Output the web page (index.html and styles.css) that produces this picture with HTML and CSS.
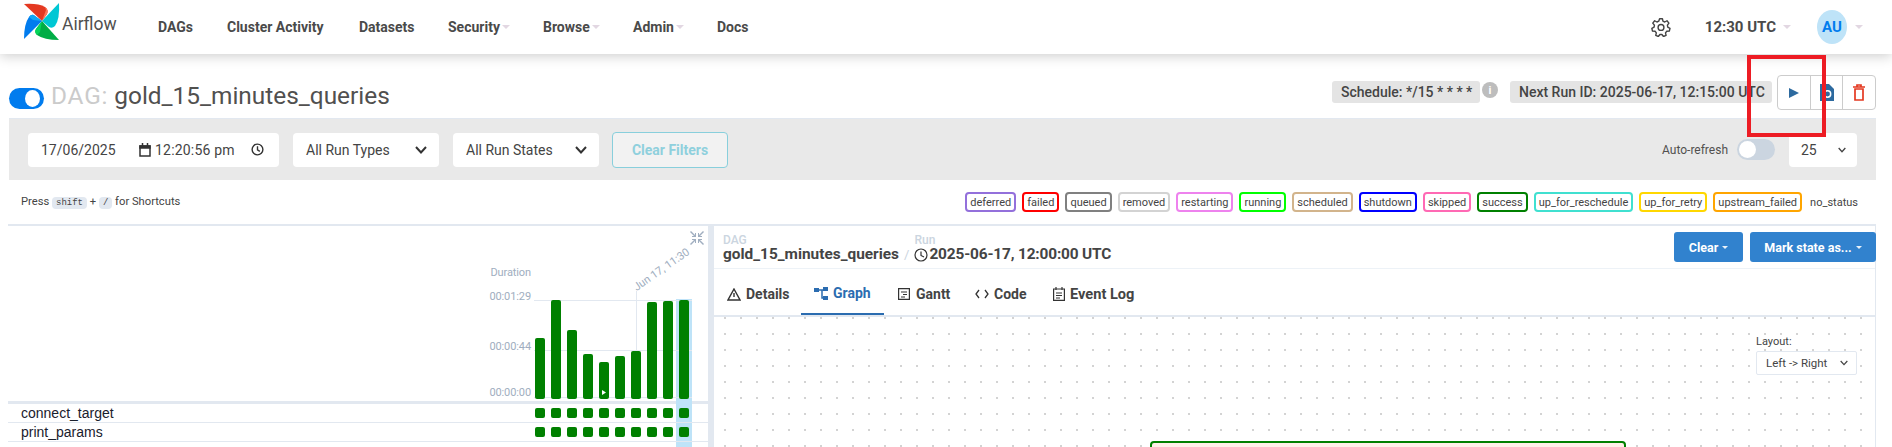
FILE: index.html
```html
<!DOCTYPE html>
<html lang="en">
<head>
<meta charset="utf-8">
<title>gold_15_minutes_queries - Airflow</title>
<link rel="stylesheet" href="styles.css">
</head>
<body>
<div class="page">
  <header class="navbar">
    <a class="brand">
      <svg class="logo" viewBox="0 0 37 37" width="37" height="37">
        <path d="M0 1 Q14 0 21 4 Q25 7 23 11 L18 18 Z" fill="#e43921"/>
        <path d="M21 4 Q25 7 23 11 L18 18 L22 7 Z" fill="#ff7557"/>
        <path d="M35 0 Q36 16 31 23 Q28 26 25 24 L18 18 Z" fill="#00c7d4"/>
        <path d="M35 37 Q20 37 13 32 Q10 29 12 26 L18 18 Z" fill="#00ad46"/>
        <path d="M13 32 Q10 29 12 26 L18 18 L16 29 Z" fill="#04d659"/>
        <path d="M0 36 Q0 21 5 14 Q8 10 11 13 L18 18 Z" fill="#017cee"/>
        <path d="M5 14 Q8 10 11 13 L18 18 L9 17 Z" fill="#11a8f5"/>
      </svg>
      <span class="brand-name">Airflow</span>
    </a>
    <nav class="nav">
      <a class="nav-item nav-dags">DAGs</a>
      <a class="nav-item nav-cluster">Cluster Activity</a>
      <a class="nav-item nav-datasets">Datasets</a>
      <a class="nav-item nav-security">Security<i class="caret"></i></a>
      <a class="nav-item nav-browse">Browse<i class="caret"></i></a>
      <a class="nav-item nav-admin">Admin<i class="caret"></i></a>
      <a class="nav-item">Docs</a>
    </nav>
    <div class="nav-right">
      <svg class="gear" viewBox="0 0 24 24" width="20" height="20" fill="none" stroke="#444" stroke-width="1.7" stroke-linejoin="round"><path d="M10.3 2h3.4l.6 3 2.2 1 2.7-1.5 2.3 2.8-1.8 2.5.4 2.4 2.7 1.4-.8 3.4-3.1.1-1.5 1.9.7 3-3.1 1.4-1.9-2.4h-2.4l-1.9 2.4-3.1-1.4.7-3-1.5-1.9-3.1-.1-.8-3.4 2.7-1.4.4-2.4L2.1 7.300l2.300-2.800L7.100 6l2.200-1z"/><circle cx="12" cy="12.500" r="3.500"/></svg>
      <span class="clock">12:30 UTC<i class="caret"></i></span>
      <span class="avatar">AU</span><i class="caret"></i>
    </div>
  </header>

  <section class="title-row">
    <div class="title-left">
      <span class="switch"><span class="knob"></span></span>
      <h1 class="title"><span class="title-muted">DAG:</span> gold_15_minutes_queries</h1>
    </div>
    <div class="title-right">
      <span class="badge badge-schedule">Schedule: */15 * * * *</span>
      <span class="info">i</span>
      <span class="badge badge-next">Next Run ID: 2025-06-17, 12:15:00 UTC</span>
      <div class="btn-group">
        <span class="icon-btn"><svg viewBox="0 0 10 10" width="10" height="10"><path d="M0 0 L10 5 L0 10 Z" fill="#2d6a9f"/></svg></span>
        <span class="icon-btn"><svg viewBox="0 0 14 17" width="14" height="17"><path d="M0 0 H9 L14 5 V17 H0 Z" fill="#2d6a9f"/><circle cx="7.500" cy="10" r="3.200" fill="none" stroke="#fff" stroke-width="1.500"/></svg></span>
        <span class="icon-btn"><svg viewBox="0 0 12 17" width="12" height="17" fill="none" stroke="#e43921" stroke-width="1.700"><path d="M0 3 H12 M4 3 V1 H8 V3"/><path d="M2 5 V16 H10 V5 Z"/></svg></span>
      </div>
    </div>
  </section>

  <section class="filters">
    <div class="field field-date">
      <span class="date-text">17/06/2025</span>
      <svg class="cal" viewBox="0 0 12 14" width="12" height="14" fill="none" stroke="#333" stroke-width="1.500"><path d="M1 3 H11 V13 H1 Z"/><path d="M1 3 H11 V5 H1 Z" fill="#333"/><path d="M3.500 0 V3 M8.500 0 V3"/></svg>
      <span class="time-text">12:20:56 pm</span>
      <svg class="clk" viewBox="0 0 14 14" width="13" height="13" fill="none" stroke="#333" stroke-width="1.500"><circle cx="7" cy="7" r="5.800"/><path d="M7 3.500 V7.500 L9.500 9"/></svg>
    </div>
    <div class="field field-select"><span>All Run Types</span><svg class="chev" viewBox="0 0 12 8" width="12" height="8" fill="none" stroke="#333" stroke-width="2"><path d="M1 1 L6 6.500 L11 1"/></svg></div>
    <div class="field field-select"><span>All Run States</span><svg class="chev" viewBox="0 0 12 8" width="12" height="8" fill="none" stroke="#333" stroke-width="2"><path d="M1 1 L6 6.500 L11 1"/></svg></div>
    <button class="clear-filters">Clear Filters</button>
    <div class="refresh">
      <span class="refresh-label">Auto-refresh</span>
      <span class="switch-off"><span class="knob-off"></span></span>
      <div class="field field-count"><span>25</span><svg viewBox="0 0 12 8" width="8" height="6" fill="none" stroke="#444" stroke-width="2"><path d="M1 1 L6 6.500 L11 1"/></svg></div>
    </div>
  </section>

  <section class="legend-row">
    <div class="shortcuts">Press <kbd class="kbd">shift</kbd> + <kbd class="kbd">/</kbd> for Shortcuts</div>
    <div class="legend">
      <span class="tag tag-deferred">deferred</span>
      <span class="tag tag-failed">failed</span>
      <span class="tag tag-queued">queued</span>
      <span class="tag tag-removed">removed</span>
      <span class="tag tag-restarting">restarting</span>
      <span class="tag tag-running">running</span>
      <span class="tag tag-scheduled">scheduled</span>
      <span class="tag tag-shutdown">shutdown</span>
      <span class="tag tag-skipped">skipped</span>
      <span class="tag tag-success">success</span>
      <span class="tag tag-reschedule">up_for_reschedule</span>
      <span class="tag tag-retry">up_for_retry</span>
      <span class="tag tag-upstream">upstream_failed</span>
      <span class="tag tag-none">no_status</span>
    </div>
  </section>

  <main class="main">
    <aside class="grid-panel">
      <span class="selected-col"></span>
      <svg class="collapse" viewBox="0 0 14 14" width="14" height="14" fill="#a0aec0"><path d="M0 1 L1 0 L5 4 V2 H6 V6 H2 V5 H4 Z M14 1 L13 0 L9 4 V2 H8 V6 H12 V5 H10 Z M0 13 L1 14 L5 10 V12 H6 V8 H2 V9 H4 Z M14 13 L13 14 L9 10 V12 H8 V8 H12 V9 H10 Z"/></svg>
      <span class="run-date">Jun 17, 11:30</span>
      <span class="run-tick"></span>
      <div class="chart">
        <div class="axis">
          <span class="axis-title">Duration</span>
          <span class="axis-label">00:01:29</span>
          <span class="axis-label">00:00:44</span>
          <span class="axis-label axis-label-low">00:00:00</span>
        </div>
        <div class="plot">
          <span class="gridline gridline-top"></span>
          <span class="gridline gridline-mid"></span>
          <span class="gridline gridline-low"></span>
          <span class="bar" style="height:61px"></span>
          <span class="bar" style="height:99px"></span>
          <span class="bar" style="height:69px"></span>
          <span class="bar" style="height:45px"></span>
          <span class="bar" style="height:37px"><svg class="bar-mark" viewBox="0 0 4 5" width="4" height="5"><path d="M0 0 L4 2.500 L0 5 Z" fill="#fff"/></svg></span>
          <span class="bar" style="height:43px"></span>
          <span class="bar" style="height:48px"></span>
          <span class="bar" style="height:97px"></span>
          <span class="bar" style="height:98px"></span>
          <span class="bar" style="height:99px"></span>
        </div>
      </div>
      <div class="chart-rule"></div>
      <div class="task-row">
        <span class="task-name">connect_target</span>
        <div class="cells"><i></i><i></i><i></i><i></i><i></i><i></i><i></i><i></i><i></i><i></i></div>
      </div>
      <div class="task-row">
        <span class="task-name">print_params</span>
        <div class="cells"><i></i><i></i><i></i><i></i><i></i><i></i><i></i><i></i><i></i><i></i></div>
      </div>
    </aside>
    <div class="splitter"></div>
    <section class="detail">
      <div class="crumbs">
        <div class="crumb-main">
          <div class="crumb">
            <span class="crumb-label">DAG</span>
            <span class="crumb-value">gold_15_minutes_queries</span>
          </div>
          <span class="crumb-sep">/</span>
          <div class="crumb">
            <span class="crumb-label crumb-label-run">Run</span>
            <span class="crumb-value crumb-date"><svg class="crumb-clock" viewBox="0 0 14 14" width="14" height="14" fill="none" stroke="#333" stroke-width="1.200"><circle cx="7" cy="7" r="6"/><path d="M7 3.500 V7.500 L10 9"/></svg>2025-06-17, 12:00:00 UTC</span>
          </div>
        </div>
        <div class="crumb-actions">
          <button class="action action-clear">Clear<i class="caret caret-white"></i></button>
          <button class="action action-mark">Mark state as...<i class="caret caret-white"></i></button>
        </div>
      </div>
      <div class="tabs">
        <a class="tab tab-details"><svg viewBox="0 0 14 13" width="14" height="13" fill="none" stroke="#333" stroke-width="1.400"><path d="M7 1 L13 12 H1 Z M7 5 V9"/></svg>Details</a>
        <a class="tab tab-graph tab-active"><svg viewBox="0 0 14 13" width="14" height="13" fill="#2b6cb0"><path d="M0 1 H5 V5 H0 Z M9 0 H14 V4 H9 Z M9 9 H14 V13 H9 Z"/><path d="M5 3 H9 M9 3 H8 V11 H9" stroke="#2b6cb0" stroke-width="1.500" fill="none"/></svg>Graph</a>
        <a class="tab tab-gantt"><svg viewBox="0 0 12 12" width="12" height="12" fill="none" stroke="#333" stroke-width="1.200"><path d="M.6.6 H11.400 V11.400 H.6 Z M3 4 H9 M5 6.500 H9 M3 9 H7"/></svg>Gantt</a>
        <a class="tab tab-code"><svg viewBox="0 0 14 10" width="14" height="10" fill="none" stroke="#333" stroke-width="1.300"><path d="M4 1 L1 5 L4 9 M10 1 L13 5 L10 9"/></svg>Code</a>
        <a class="tab tab-log"><svg viewBox="0 0 12 14" width="12" height="14" fill="none" stroke="#333" stroke-width="1.200"><path d="M.6 2 H11.400 V13.400 H.6 Z M3 0 V3 M9 0 V3 M3 6 H9 M3 8.500 H9 M3 11 H7"/></svg>Event Log</a>
      </div>
      <div class="canvas">
        <div class="layout-control">
          <label class="layout-label">Layout:</label>
          <div class="layout-select"><span>Left -&gt; Right</span><svg viewBox="0 0 12 8" width="8" height="6" fill="none" stroke="#444" stroke-width="1.800"><path d="M1 1 L6 6.500 L11 1"/></svg></div>
        </div>
        <div class="node"></div>
      </div>
    </section>
  </main>
  <div class="annotation"></div>
</div>
</body>
</html>
```
FILE: styles.css
```css
* { box-sizing: border-box; }
html, body { margin: 0; padding: 0; background: #fff; }
.page {
  position: relative;
  width: 1892px;
  height: 447px;
  overflow: hidden;
  font-family: Roboto, "Liberation Sans", sans-serif;
  color: #444;
}

/* navbar */
.navbar {
  position: relative;
  z-index: 2;
  display: flex;
  align-items: center;
  height: 54px;
  background: #fff;
  box-shadow: 0 2px 12px rgba(0, 0, 0, .2);
}
.brand { display: flex; align-items: center; width: 158px; padding: 0 0 0 24px; height: 54px; position: relative; }
.logo { margin-top: -12px; flex: none; }
.brand-name { font-size: 17.500px; color: #51504f; margin: -6px 0 0 1px; }
.nav { display: flex; align-items: center; }
.nav-item { display: flex; align-items: center; font-size: 14px; font-weight: 700; color: #4a4a4a; white-space: nowrap; }
.nav-dags { width: 69px; }
.nav-cluster { width: 132px; }
.nav-datasets { width: 89px; }
.nav-security { width: 95px; }
.nav-browse { width: 90px; }
.nav-admin { width: 84px; }
.caret {
  display: inline-block;
  width: 0; height: 0;
  margin-left: 2px;
  border-left: 4px solid transparent;
  border-right: 4px solid transparent;
  border-top: 4px solid #e2d7e2;
}
.nav-right { display: flex; align-items: center; margin-left: auto; padding-right: 29px; }
.gear { margin-right: 34px; }
.clock { display: flex; align-items: center; font-size: 15px; font-weight: 700; color: #4a4a4a; margin-right: 26px; }
.clock .caret { margin-left: 7px; }
.avatar {
  display: flex; align-items: center; justify-content: center;
  width: 30px; height: 34px;
  border-radius: 50%;
  background: #bee3f8;
  color: #017cee;
  font-size: 15px; font-weight: 700;
  margin-right: 6px;
}

/* title row */
.title-row {
  display: flex;
  justify-content: space-between;
  align-items: flex-start;
  height: 65px;
  margin: 0 16px 0 9px;
  border-bottom: 1px solid #e2e8f0;
  padding-top: 21px;
}
.title-left { display: flex; align-items: flex-start; margin-top: 8px; }
.switch { display: flex; justify-content: flex-end; align-items: center; width: 35px; height: 21px; margin-top: 5px; border-radius: 11px; background: #017cee; padding: 0 4px; }
.knob { width: 15px; height: 17px; border-radius: 50%; background: #fff; }
.title { margin: 0 0 0 7px; font-size: 24.400px; font-weight: 400; color: #51504f; line-height: 26px; white-space: nowrap; }
.title-muted { color: #cbcbcb; letter-spacing: .8px; }
.title-right { display: flex; align-items: flex-start; }
.badge { display: flex; align-items: center; height: 22px; margin-top: 6px; padding: 0 9px; background: #e4e4e4; border-radius: 3px; font-size: 14px; font-weight: 500; color: #444; white-space: nowrap; }
.badge-schedule { width: 148px; }
.badge-next { width: 262px; margin-right: 5px; }
.info { display: flex; align-items: center; justify-content: center; width: 16px; height: 16px; margin: 7px 12px 0 2px; border-radius: 50%; background: #bdbdbd; color: #fff; font-size: 11px; font-weight: 700; }
.btn-group { display: flex; width: 99px; height: 35px; border: 1px solid #ccc; border-radius: 4px; background: #fff; }
.icon-btn { display: flex; align-items: center; justify-content: center; flex: 1; border-right: 1px solid #ccc; }
.icon-btn:last-child { border-right: 0; }

/* filters */
.filters {
  display: flex;
  align-items: center;
  height: 61px;
  margin: 0 16px 0 9px;
  padding: 0 19px;
  background: #e9e9e9;
}
.field { display: flex; align-items: center; height: 34px; background: #fff; border-radius: 4px; font-size: 14px; color: #444; }
.field-date { width: 251px; padding-left: 13px; margin-right: 14px; }
.date-text { width: 98px; }
.cal { margin-right: 4px; }
.time-text { width: 96px; letter-spacing: .2px; }
.field-select { justify-content: space-between; width: 146px; padding: 0 12px 0 13px; margin-right: 14px; }
.clear-filters {
  width: 116px; height: 36px;
  margin-left: -1px;
  border: 1px solid #88cfdc;
  border-radius: 4px;
  background: #f2f2f2;
  color: #8fd0dd;
  font: 700 14px Roboto, "Liberation Sans", sans-serif;
}
.refresh { display: flex; align-items: center; margin-left: auto; }
.refresh-label { font-size: 12px; color: #51504f; margin-right: 9px; }
.switch-off { display: flex; align-items: center; width: 38px; height: 21px; border-radius: 11px; background: #cbd5e0; padding: 0 2px; margin-right: 14px; }
.knob-off { width: 17px; height: 17px; border-radius: 50%; background: #fff; }
.field-count { justify-content: space-between; width: 68px; padding: 0 11px 0 12px; }

/* legend */
.legend-row { display: flex; justify-content: space-between; align-items: center; height: 44px; padding: 0 32px 0 21px; }
.shortcuts { font-size: 11.200px; color: #444; white-space: nowrap; }
.kbd { display: inline-block; padding: 1px 4px; background: #e2e8f0; border-radius: 4px; font: 9px "Liberation Mono", monospace; color: #444; }
.legend { display: flex; align-items: center; gap: 6px; }
.tag { display: flex; align-items: center; height: 20px; padding: 0 3px; border: 2px solid; border-radius: 4px; font-size: 11px; color: #444; white-space: nowrap; background: #fff; }
.tag-deferred { border-color: mediumpurple; }
.tag-failed { border-color: red; }
.tag-queued { border-color: gray; }
.tag-removed { border-color: lightgrey; }
.tag-restarting { border-color: violet; }
.tag-running { border-color: lime; }
.tag-scheduled { border-color: tan; }
.tag-shutdown { border-color: blue; }
.tag-skipped { border-color: hotpink; }
.tag-success { border-color: green; }
.tag-reschedule { border-color: turquoise; }
.tag-retry { border-color: gold; }
.tag-upstream { border-color: orange; }
.tag-none { border-color: transparent; padding: 0; }

/* main split */
.main { display: flex; height: 223px; margin-left: 8px; margin-right: 16px; border-top: 2px solid #e2e8f0; }
.grid-panel { position: relative; width: 700px; flex: none; }
.selected-col { position: absolute; left: 668px; top: 73px; bottom: 0; width: 16px; background: #bee3f8; }
.collapse { position: absolute; left: 682px; top: 5px; }
.run-date { position: absolute; left: 621px; top: 37px; font-size: 11px; line-height: 14px; color: #a0aec0; white-space: nowrap; transform: rotate(-35deg); }
.run-tick { position: absolute; left: 628px; top: 65px; width: 1px; height: 60px; background: #e2e8f0; }
.chart { display: flex; justify-content: flex-end; height: 175px; padding: 40px 16px 0 0; }
.axis { display: flex; flex-direction: column; align-items: flex-end; width: 50px; margin-right: 3px; font-size: 11px; letter-spacing: -.1px; color: #a0aec0; }
.axis-title { flex: none; height: 24px; line-height: 14px; }
.axis-label { flex: none; height: 14px; line-height: 14px; margin-top: 36px; }
.axis-title + .axis-label { margin-top: 0; }
.axis-label-low { margin-top: 32px; }
.plot { position: relative; display: flex; align-items: flex-end; align-self: flex-start; gap: 6px; height: 99px; width: 158px; margin-top: 34px; padding-left: 1px; }
.gridline { position: absolute; left: 0; right: 0; height: 1px; background: #e2e8f0; }
.gridline-top { top: 0; }
.gridline-mid { top: 50px; }
.gridline-low { top: 97px; }
.bar { position: relative; display: block; width: 10px; background: green; border-radius: 2px; }
.bar-mark { position: absolute; left: 3px; bottom: 4px; }
.chart-rule { height: 3px; background: #e2e8f0; }
.task-row { position: relative; display: flex; align-items: center; justify-content: space-between; height: 19px; border-bottom: 1px solid #e2e8f0; padding: 0 16px 0 13px; }
.task-name { font: 14px "Liberation Sans", sans-serif; color: #1a202c; }
.cells { display: flex; gap: 6px; width: 158px; padding-left: 1px; }
.cells i { display: block; width: 10px; height: 10px; background: green; border-radius: 2px; }
.splitter { width: 6px; background: #e2e8f0; flex: none; }

/* detail */
.detail { position: relative; flex: 1; min-width: 0; display: flex; flex-direction: column; border-right: 1px solid #e2e8f0; }
.crumbs { display: flex; justify-content: space-between; height: 43px; border-bottom: 1px solid #edf2f7; padding: 6px 0 0 9px; }
.crumb-main { display: flex; align-items: flex-end; padding-bottom: 5px; }
.crumb { display: flex; flex-direction: column; }
.crumb-label { font-size: 12px; line-height: 12px; color: #cbd5e0; font-weight: 500; }
.crumb-value { display: flex; align-items: center; font-size: 15.400px; line-height: 17px; font-weight: 700; color: #444; white-space: nowrap; }
.crumb-date { letter-spacing: -.15px; }
.crumb-clock { margin-right: 1px; }
.crumb-sep { margin: 0 5px; font-size: 13px; color: #cbd5e0; line-height: 17px; }
.crumb-actions { display: flex; gap: 7px; margin-right: -1px; }
.action { display: flex; align-items: center; justify-content: center; height: 30px; border: 0; border-radius: 3px; background: #3182ce; color: #fff; font: 700 12.500px Roboto, "Liberation Sans", sans-serif; }
.caret-white { border-top-color: #e8f1fa; border-left-width: 3px; border-right-width: 3px; border-top-width: 3px; margin-left: 4px; }
.action-clear { width: 69px; }
.action-mark { width: 126px; }
.tabs { display: flex; height: 48px; border-bottom: 2px solid #e2e8f0; padding-left: 13px; }
.tab { display: flex; align-items: center; gap: 5px; font-size: 14px; font-weight: 700; color: #444; white-space: nowrap; height: 46px; padding-top: 4px; }
.tab-details { width: 74px; }
.tab-graph { width: 83px; padding-left: 13px; margin-right: 14px; }
.tab-gantt { width: 77px; gap: 6px; }
.tab-code { width: 78px; }
.tab-log { font-size: 14.600px; }
.tab-active { color: #2b6cb0; border-bottom: 2px solid #2b6cb0; }
.canvas {
  position: relative;
  flex: 1;
  background-image: radial-gradient(circle, #d2d2d2 .7px, transparent 1px);
  background-size: 16px 16px;
  background-position: 3px -7px;
}
.layout-control { position: absolute; right: 18px; top: 18px; width: 101px; }
.layout-label { display: block; font-size: 11px; line-height: 14px; color: #444; margin-bottom: 2px; }
.layout-select { display: flex; align-items: center; justify-content: space-between; height: 24px; padding: 0 8px 0 9px; background: #fff; border: 1px solid #e2e8f0; border-radius: 2px; font-size: 11.500px; color: #444; }
.node { position: absolute; left: 436px; top: 124px; width: 476px; height: 40px; background: #fff0e8; border: 2px solid green; border-radius: 4px; }

/* red annotation drawn on the screenshot */
.annotation { position: absolute; left: 1747px; top: 55px; width: 79px; height: 82px; border: 4px solid #ed1c24; z-index: 3; }
```
